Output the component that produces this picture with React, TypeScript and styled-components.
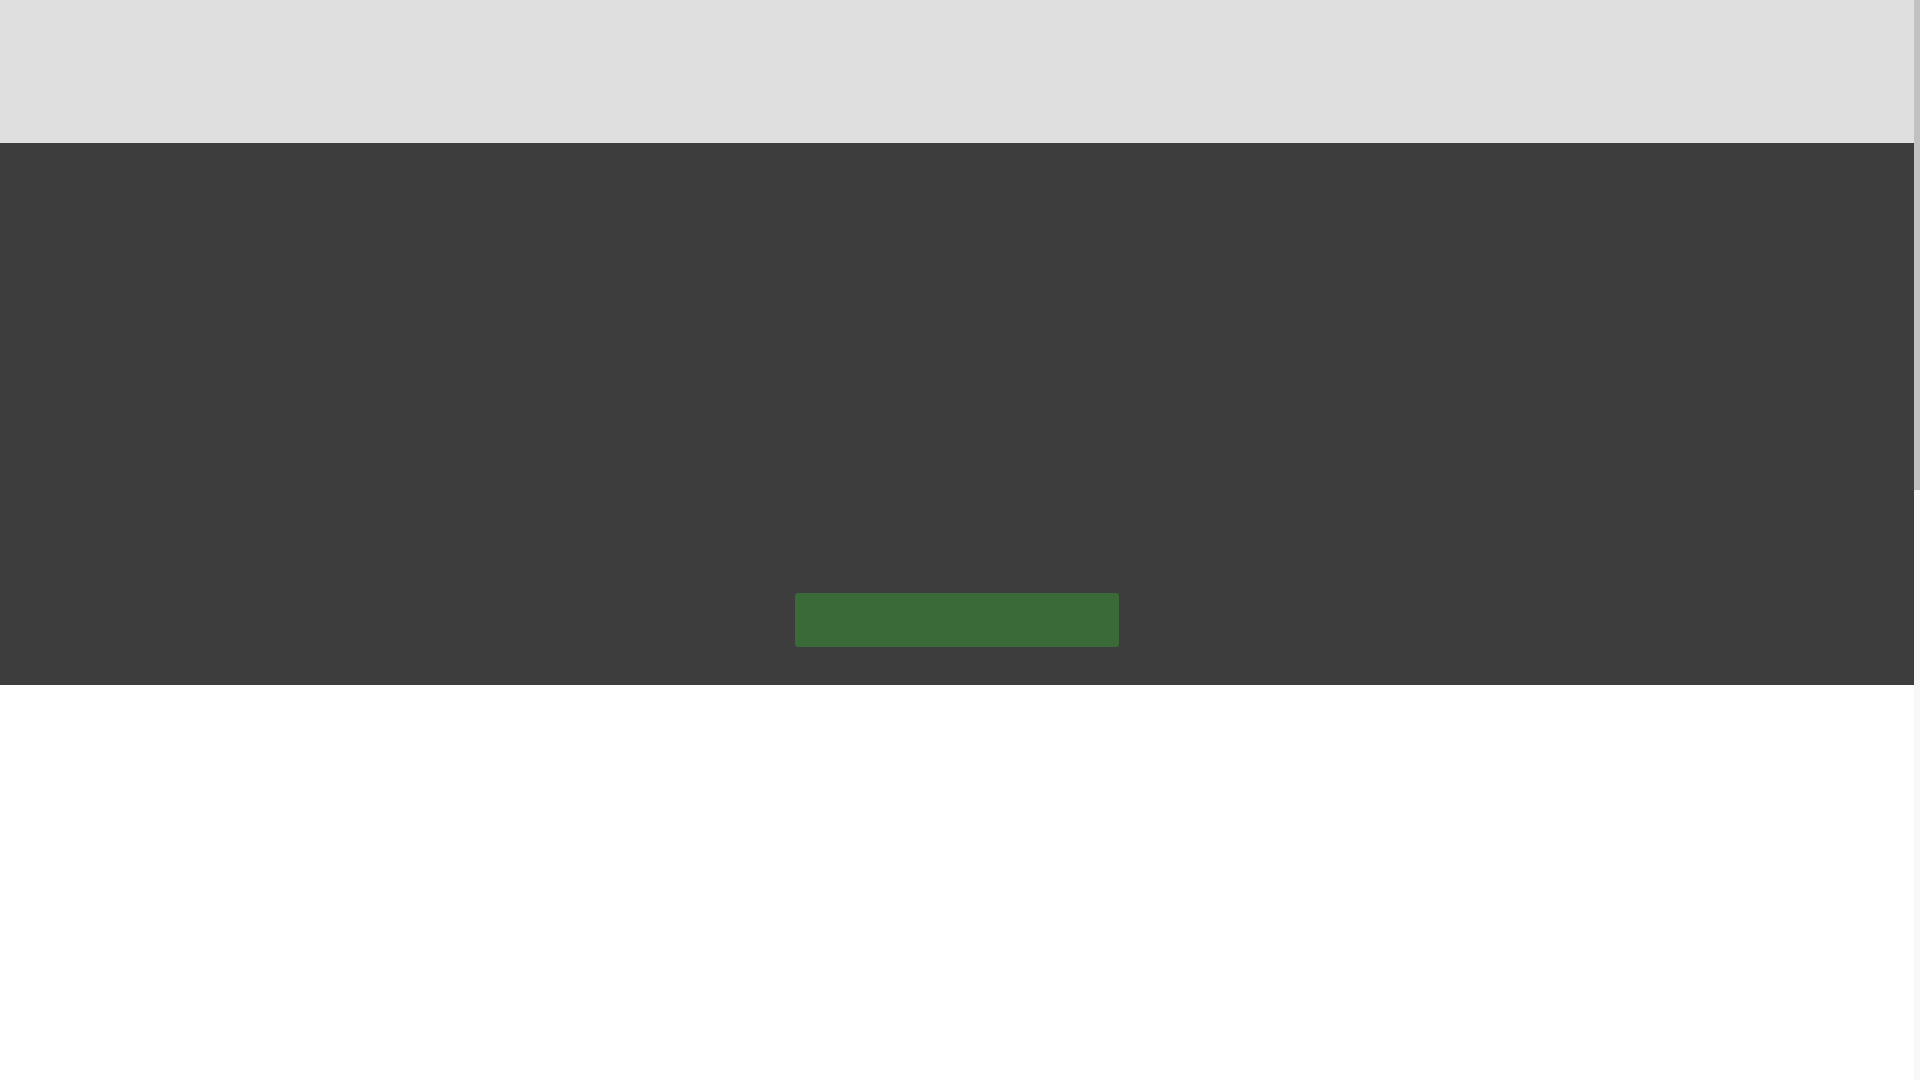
import React from 'react';
import styled, { createGlobalStyle } from 'styled-components';

const GlobalStyle = createGlobalStyle`
  html, body {
    margin: 0;
    padding: 0;
    height: 100%;
    overflow: hidden;
    background: #ffffff;
    font-family: "Open Sans", "Liberation Sans", sans-serif;
  }
`;

// window frame: page column on the left, thin scroll rail on the right
const Viewport = styled.div`
  display: flex;
  height: 100vh;
  overflow: hidden;
`;

const Scroller = styled.div`
  flex: 1;
  overflow: hidden;
`;

const Page = styled.div`
  display: flex;
  flex-direction: column;
  min-height: 2380px;
`;

const TopBar = styled.header`
  height: 143px;
  background: #dfdfdf;
`;

const Hero = styled.section`
  height: 542px;
  box-sizing: border-box;
  background: #3d3d3d;
  display: flex;
  flex-direction: column;
  align-items: center;
  justify-content: flex-end;
  padding-bottom: 38px;
`;

const CallButton = styled.button`
  width: 324px;
  height: 54px;
  border: none;
  border-radius: 3px;
  background: #3a6a38;
  color: #3a6a38;
  font-size: 16px;
  cursor: pointer;
`;

const Content = styled.main`
  flex: 1;
  background: #ffffff;
`;

const ScrollRail = styled.div`
  width: 6px;
  flex-shrink: 0;
  background: #f8f8f8;
  display: flex;
  flex-direction: column;
`;

const ScrollThumb = styled.div<{ $size: number }>`
  height: ${({ $size }) => $size}px;
  background: #c1c1c1;
`;

export default function App() {
  const pageHeight = 2380;
  const viewHeight = 1080;
  const thumb = Math.round((viewHeight * viewHeight) / pageHeight);

  return (
    <>
      <GlobalStyle />
      <Viewport>
        <Scroller>
          <Page>
            <TopBar />
            <Hero>
              <CallButton aria-label="Start" />
            </Hero>
            <Content />
          </Page>
        </Scroller>
        <ScrollRail>
          <ScrollThumb $size={thumb} />
        </ScrollRail>
      </Viewport>
    </>
  );
}
